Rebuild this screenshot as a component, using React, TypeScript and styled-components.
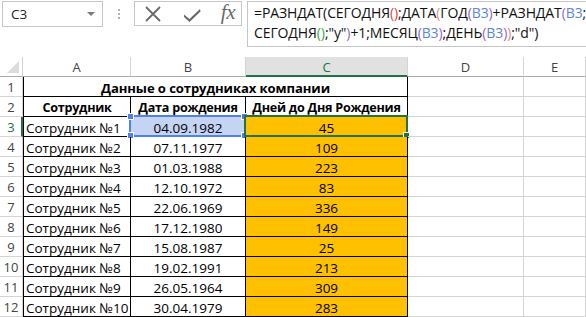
import React from "react";
import styled, { createGlobalStyle, css } from "styled-components";

const GlobalStyle = createGlobalStyle`
  html, body { margin: 0; padding: 0; background: #fff; }
  body { width: 586px; height: 317px; overflow: hidden; }
`;

const CELL_FONT = `"Open Sans", "Liberation Sans", sans-serif`;
const UI_FONT = `"Open Sans", "Liberation Sans", sans-serif`;
const GRID = "#d4d4d4";
const GREEN = "#217346";
const BLUE = "#4f81e9";

const Page = styled.div`
  width: 586px;
  height: 317px;
  overflow: hidden;
  background: #fff;
`;

const TopBar = styled.div`
  height: 57px;
  display: flex;
  align-items: flex-start;
  padding-top: 1px;
  box-sizing: border-box;
`;

const NameBox = styled.div`
  margin-left: 2px;
  width: 101px;
  height: 26px;
  box-sizing: border-box;
  border: 1px solid #c6c6c6;
  display: flex;
  align-items: center;
  justify-content: space-between;
  padding: 0 7px 0 8px;
  font-family: ${UI_FONT};
  font-size: 13.5px;
  color: #222;
`;

const DropArrow = styled.span`
  width: 0;
  height: 0;
  border-left: 4px solid transparent;
  border-right: 4px solid transparent;
  border-top: 4px solid #7a7a7a;
`;

const Grip = styled.div`
  width: 31px;
  height: 26px;
  display: flex;
  flex-direction: column;
  align-items: center;
  justify-content: center;
  gap: 2px;
`;

const GripDot = styled.span`
  width: 2px;
  height: 2px;
  background: #b0b0b0;
`;

const ButtonBox = styled.div`
  width: 108px;
  height: 25px;
  box-sizing: border-box;
  border: 1px solid #c6c6c6;
  display: flex;
  align-items: center;
  justify-content: space-between;
  padding: 0 6px 0 8px;
`;

const FxText = styled.span`
  font-family: "Liberation Serif", serif;
  font-style: italic;
  font-size: 21px;
  color: #6a6a6a;
  line-height: 1;
  letter-spacing: -0.5px;
  margin-top: -2px;
`;

const FormulaInput = styled.div`
  margin-left: 5px;
  flex: 1;
  height: 46px;
  box-sizing: border-box;
  border: 1px solid #c6c6c6;
  border-right: none;
  padding: 1px 0 0 6px;
  font-family: ${UI_FONT};
  font-size: 14px;
  letter-spacing: -0.1px;
  line-height: 20px;
  color: #111;
  white-space: nowrap;
  overflow: hidden;
`;

const Tok = styled.span<{ $c: string }>`
  color: ${(p) => p.$c};
`;

const Sheet = styled.div`
  display: grid;
  grid-template-columns: 23px 108px 115px 162px 116px 1fr;
  grid-auto-rows: 20px;
`;

const Corner = styled.div`
  position: relative;
  box-sizing: border-box;
  border-right: 1px solid ${GRID};
  border-bottom: 1px solid #ababab;
  &::after {
    content: "";
    position: absolute;
    right: 3px;
    bottom: 3px;
    width: 0;
    height: 0;
    border-left: 12px solid transparent;
    border-bottom: 12px solid #dcdcdc;
  }
`;

const ColHead = styled.div<{ $active?: boolean }>`
  box-sizing: border-box;
  display: flex;
  align-items: center;
  justify-content: center;
  font-family: ${UI_FONT};
  font-size: 13px;
  color: #444;
  border-right: 1px solid ${GRID};
  border-bottom: 1px solid #ababab;
  ${(p) =>
    p.$active &&
    css`
      background: #e1e1e1;
      color: ${GREEN};
      border-bottom: 2px solid ${GREEN};
      padding-top: 1px;
    `}
`;

const RowHead = styled.div<{ $active?: boolean }>`
  box-sizing: border-box;
  display: flex;
  align-items: center;
  justify-content: center;
  font-family: ${UI_FONT};
  font-size: 13px;
  color: #444;
  border-right: 1px solid ${GRID};
  border-bottom: 1px solid ${GRID};
  padding-top: 1px;
  ${(p) =>
    p.$active &&
    css`
      color: ${GREEN};
      border-right: 2px solid ${GREEN};
      padding-left: 1px;
    `}
`;

type Align = "left" | "center";

const Cell = styled.div<{
  $align?: Align;
  $bold?: boolean;
  $fill?: string;
  $table?: boolean;
  $first?: boolean;
  $span?: number;
}>`
  position: relative;
  box-sizing: border-box;
  display: flex;
  align-items: center;
  justify-content: ${(p) => (p.$align === "left" ? "flex-start" : "center")};
  padding: 2px 2px 0 2px;
  font-family: ${CELL_FONT};
  font-size: ${(p) => (p.$bold ? "12.6px" : "13.5px")};
  letter-spacing: ${(p) => (p.$bold ? "-0.25px" : "0")};
  font-weight: ${(p) => (p.$bold ? 700 : 400)};
  color: #000;
  white-space: nowrap;
  background: ${(p) => p.$fill || "transparent"};
  border-right: 1px solid ${(p) => (p.$table ? "#000" : GRID)};
  border-bottom: 1px solid ${(p) => (p.$table ? "#000" : GRID)};
  ${(p) => p.$first && css`border-left: 1px solid #000;`}
  ${(p) => p.$span && css`grid-column: span ${p.$span};`}
`;

const TitleCell = styled(Cell)`
  font-size: 13.1px;
  letter-spacing: -0.1px;
`;

const Frame = styled.div<{ $color: string }>`
  position: absolute;
  left: -2px;
  top: -2px;
  right: -1px;
  bottom: -1px;
  border: 2px solid ${(p) => p.$color};
  pointer-events: none;
`;

const Handle = styled.span<{ $color: string; $x: "l" | "r"; $y: "t" | "b" }>`
  position: absolute;
  width: 5px;
  height: 5px;
  background: ${(p) => p.$color};
  border: 1px solid #fff;
  ${(p) => (p.$x === "l" ? "left: -4px;" : "right: -4px;")}
  ${(p) => (p.$y === "t" ? "top: -4px;" : "bottom: -4px;")}
`;

const rows: [string, string, number][] = [
  ["Сотрудник №1", "04.09.1982", 45],
  ["Сотрудник №2", "07.11.1977", 109],
  ["Сотрудник №3", "01.03.1988", 223],
  ["Сотрудник №4", "12.10.1972", 83],
  ["Сотрудник №5", "22.06.1969", 336],
  ["Сотрудник №6", "17.12.1980", 149],
  ["Сотрудник №7", "15.08.1987", 25],
  ["Сотрудник №8", "19.02.1991", 213],
  ["Сотрудник №9", "26.05.1964", 309],
  ["Сотрудник №10", "30.04.1979", 283],
];

const RED = "#e5403a";
const PINK = "#ef8a7e";
const PURPLE = "#9b63c6";
const GREENP = "#3aa84a";
const REF = "#5b86e0";

export default function App() {
  return (
    <Page>
      <GlobalStyle />
      <TopBar>
        <NameBox>
          <span>C3</span>
          <DropArrow />
        </NameBox>
        <Grip>
          <GripDot />
          <GripDot />
          <GripDot />
        </Grip>
        <ButtonBox>
          <svg width="20" height="18" viewBox="0 0 20 18">
            <path d="M3 2 L17 16 M17 2 L3 16" stroke="#6a6a6a" strokeWidth="1.8" fill="none" />
          </svg>
          <svg width="20" height="18" viewBox="0 0 20 18">
            <path d="M2 9.5 L7.5 14 L18 4 L18.5 6.5 L7.5 17 L2 12 Z" fill="#6a6a6a" />
          </svg>
          <FxText>fx</FxText>
        </ButtonBox>
        <FormulaInput>
          <div>
            =РАЗНДАТ(СЕГОДНЯ<Tok $c={RED}>()</Tok>;ДАТА<Tok $c={PINK}>(</Tok>ГОД
            <Tok $c={PURPLE}>(</Tok>
            <Tok $c={REF}>B3</Tok>
            <Tok $c={PURPLE}>)</Tok>+РАЗНДАТ<Tok $c={PURPLE}>(</Tok>
            <Tok $c={REF}>B3</Tok>;
          </div>
          <div>
            СЕГОДНЯ<Tok $c={GREENP}>()</Tok>;"y"<Tok $c={PURPLE}>)</Tok>+1;МЕСЯЦ
            <Tok $c={PURPLE}>(</Tok>
            <Tok $c={REF}>B3</Tok>
            <Tok $c={PURPLE}>)</Tok>;ДЕНЬ<Tok $c={PURPLE}>(</Tok>
            <Tok $c={REF}>B3</Tok>
            <Tok $c={PURPLE}>)</Tok>
            <Tok $c={PINK}>)</Tok>;"d")
          </div>
        </FormulaInput>
      </TopBar>
      <Sheet>
        <Corner />
        <ColHead>A</ColHead>
        <ColHead>B</ColHead>
        <ColHead $active>C</ColHead>
        <ColHead>D</ColHead>
        <ColHead>E</ColHead>

        <RowHead>1</RowHead>
        <TitleCell $span={3} $bold $table $first>
          Данные о сотрудниках компании
        </TitleCell>
        <Cell />
        <Cell />

        <RowHead>2</RowHead>
        <Cell $bold $table $first>Сотрудник</Cell>
        <Cell $bold $table>Дата рождения</Cell>
        <Cell $bold $table>Дней до Дня Рождения</Cell>
        <Cell />
        <Cell />

        {rows.map(([name, date, days], i) => {
          const active = i === 0;
          return (
            <React.Fragment key={name}>
              <RowHead $active={active}>{i + 3}</RowHead>
              <Cell $align="left" $table $first>
                {name}
              </Cell>
              <Cell $table $fill={active ? "#c5d4f3" : undefined}>
                {date}
                {active && (
                  <Frame $color={BLUE}>
                    <Handle $color={BLUE} $x="l" $y="t" />
                    <Handle $color={BLUE} $x="r" $y="t" />
                    <Handle $color={BLUE} $x="l" $y="b" />
                    <Handle $color={BLUE} $x="r" $y="b" />
                  </Frame>
                )}
              </Cell>
              <Cell $table $fill="#ffc000">
                {days}
                {active && (
                  <Frame $color={GREEN}>
                    <Handle $color={GREEN} $x="r" $y="b" />
                  </Frame>
                )}
              </Cell>
              <Cell />
              <Cell />
            </React.Fragment>
          );
        })}
      </Sheet>
    </Page>
  );
}
